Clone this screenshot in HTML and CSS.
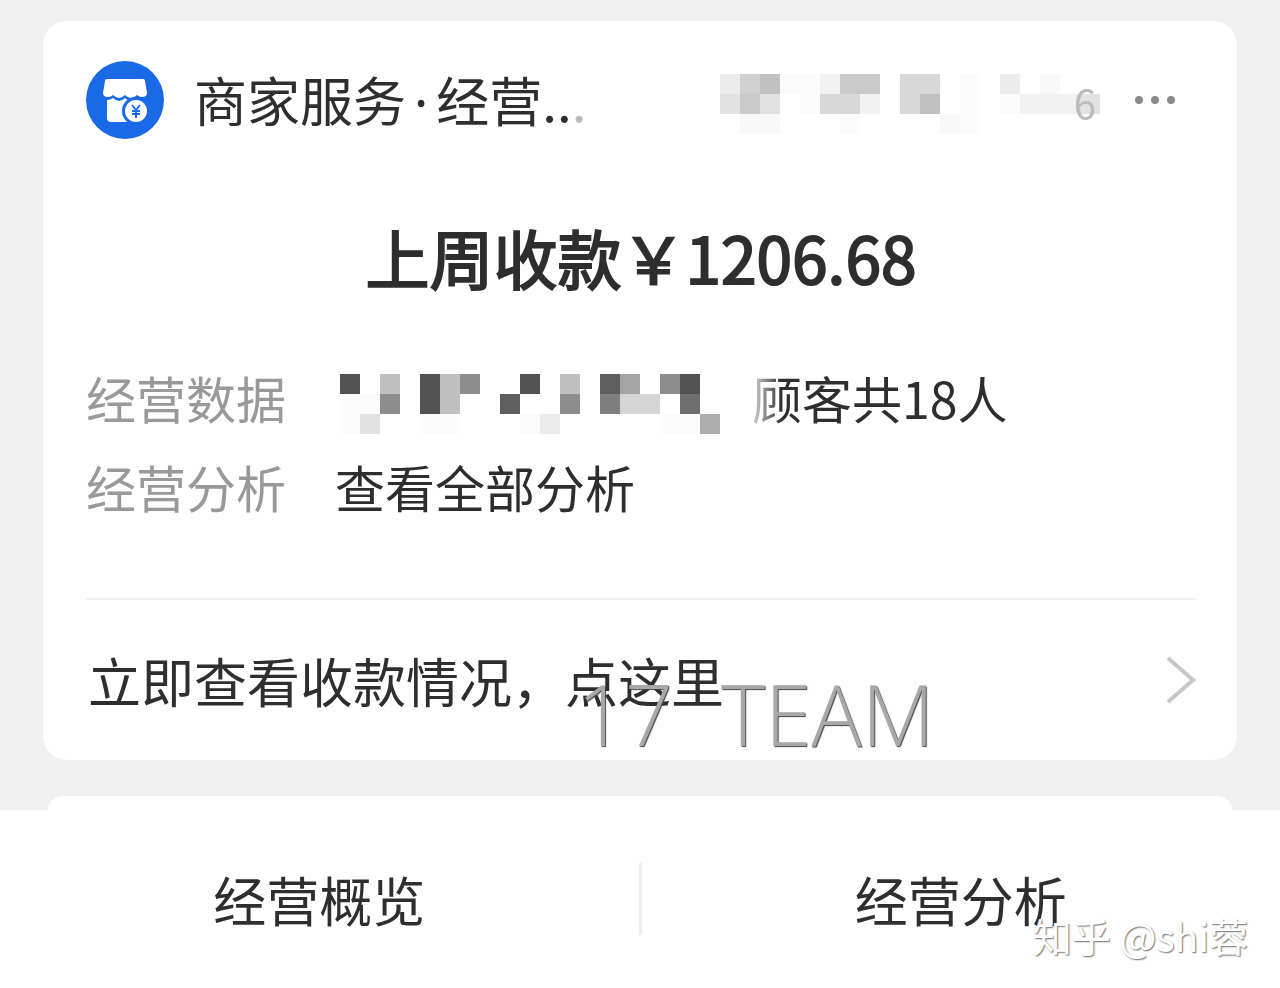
FILE: index.html
```
<!DOCTYPE html>
<html lang="zh-CN">

<head>
  <meta charset="UTF-8">
  <meta name="viewport" content="width=device-width, initial-scale=1.0">
  <title>商家服务</title>
  <link rel="stylesheet" href="styles.css">
</head>

<body>
  <main class="feed">
    <article class="card">
      <header class="card-header">
        <svg class="logo" viewBox="0 0 78 78" aria-hidden="true">
          <circle cx="39" cy="39" r="39" fill="#1a6ae8" />
          <path fill="#fff" d="M21 18h36q2 0 2 2l2 12q0 4-5 4-3 0-5-2-3 3-6 3t-6-3q-3 3-6 3t-6-3q-2 2-5 2-5 0-5-4l2-12q0-2 2-2z" />
          <path fill="#fff" d="M21 39q3 0 6-2 3 3 6 3t6-3q3 3 6 3h10v21H25q-4 0-4-4z" />
          <circle cx="50" cy="50" r="14" fill="#1a6ae8" />
          <circle cx="50" cy="50" r="11" fill="#fff" />
          <path fill="none" stroke="#1a6ae8" stroke-width="2" d="M46 44l4 5 4-5M50 49v8M46 50h8M46 53h8" />
        </svg>
        <h1 class="service">商家服务<span class="dot">·</span>经营..<span class="fade">.</span></h1>
        <div class="time">
          <svg class="mosaic" viewBox="0 0 19 3" shape-rendering="crispEdges" aria-hidden="true">
            <path fill="#ececec" d="M0 0h1v1H0zM14 0h1v1h-1z" />
            <path fill="#d0d0d0" d="M1 0h1v1H1z" />
            <path fill="#c1c1c1" d="M2 0h1v1H2zM10 1h1v1h-1z" />
            <path fill="#e2e2e2" d="M0 1h1v1H0zM2 1h1v1H2zM18 1h1v1h-1z" />
            <path fill="#cacaca" d="M1 1h1v1H1zM6 0h2v1H6z" />
            <path fill="#f2f2f2" d="M5 0h1v1H5zM7 1h1v1H7zM15 1h3v1h-3z" />
            <path fill="#d8d8d8" d="M5 1h2v1H5zM9 0h2v1H9zM9 1h1v1H9z" />
            <path fill="#f8f8f8" d="M16 0h1v1h-1zM1 2h2v1H1zM11 2h1v1h-1z" />
            <path fill="#fbfbfb" d="M3 0h2v1H3zM4 1h1v1H4zM12 0h1v3h-1zM14 1h1v1h-1zM6 2h1v1H6z" />
          </svg>
          <span class="digit">6</span>
        </div>
        <button class="more" aria-label="更多">
          <svg viewBox="0 0 40 8" aria-hidden="true">
            <circle cx="4" cy="4" r="4" />
            <circle cx="20" cy="4" r="4" />
            <circle cx="36" cy="4" r="4" />
          </svg>
        </button>
      </header>

      <h2 class="amount">上周收款￥1206.68</h2>

      <dl class="details">
        <dt>经营数据</dt>
        <dd>
          <svg class="mosaic" viewBox="0 0 19 3" shape-rendering="crispEdges" aria-hidden="true">
            <path fill="#525252" d="M0 0h1v1H0zM4 0h1v2H4zM9 0h1v1H9zM17 0h1v1h-1z" />
            <path fill="#c0c0c0" d="M2 0h1v1H2zM11 0h1v1h-1zM5 0h1v2H5z" />
            <path fill="#8d8d8d" d="M2 1h1v1H2zM6 0h1v1H6zM11 1h1v1h-1zM16 0h1v1h-1z" />
            <path fill="#5e5e5e" d="M8 1h1v1H8zM13 0h1v1h-1z" />
            <path fill="#a3a3a3" d="M14 0h1v1h-1z" />
            <path fill="#7f7f7f" d="M13 1h1v1h-1z" />
            <path fill="#6e6e6e" d="M17 1h1v1h-1z" />
            <path fill="#d5d5d5" d="M14 1h2v1h-2z" />
            <path fill="#e2e2e2" d="M1 2h1v1H1z" />
            <path fill="#ebebeb" d="M10 2h1v1h-1z" />
            <path fill="#adadad" d="M18 2h1v1h-1z" />
            <path fill="#fbfbfb" d="M0 1h2v1H0zM0 2h1v1H0zM4 2h2v1H4zM9 2h1v1H9zM16 2h2v1h-2z" />
          </svg>
          <span class="customers"><span class="first">顾</span>客共18人</span>
        </dd>
        <dt>经营分析</dt>
        <dd>查看全部分析</dd>
      </dl>

      <a class="action" href="#">
        <span>立即查看收款情况，点这里</span>
        <svg class="arrow" viewBox="0 0 30 48" aria-hidden="true">
          <path d="M2 2l25 22L2 46" />
        </svg>
      </a>
      <div class="team-mark"><span>17</span><span>TEAM</span></div>
    </article>
    <div class="card next-card"></div>
  </main>

  <nav class="tabs">
    <button class="tab">经营概览</button>
    <button class="tab">经营分析</button>
    <div class="zhihu-mark">知乎 @shi蓉</div>
  </nav>
</body>

</html>
```
FILE: styles.css
```
* {
  box-sizing: border-box;
}

body {
  display: flex;
  flex-direction: column;
  min-height: 100vh;
  margin: 0;
  background-color: #f0f0f0;
  color: #2e2e2e;
  font-family: "Noto Sans CJK SC", sans-serif;
}

h1,
h2,
dl,
dd {
  margin: 0;
}

button {
  padding: 0;
  border: 0;
  background: none;
  color: inherit;
  font-family: inherit;
  cursor: pointer;
}

.feed {
  padding: 21px 43px 0;
}

.card {
  position: relative;
  padding: 40px 41px 0 43px;
  border-radius: 24px;
  background-color: #fefefe;
}

.card-header {
  display: flex;
  align-items: center;
  height: 78px;
}

.logo {
  flex: none;
  width: 78px;
  height: 78px;
}

.service {
  flex: 1;
  margin-left: 30px;
  font-size: 53px;
  font-weight: 400;
  line-height: 72px;
  white-space: nowrap;
}

.dot {
  padding: 0 8px;
  font-family: "Noto Sans", sans-serif;
}

.fade {
  color: #bbb;
}

.time {
  display: flex;
  position: relative;
  margin-top: 8px;
}

.mosaic {
  flex: none;
  width: 380px;
  height: 60px;
}

.digit {
  position: absolute;
  right: 4px;
  top: 0;
  color: #bbb;
  font-size: 40px;
  line-height: 56px;
}

.more {
  width: 40px;
  height: 40px;
  margin: 0 21px 0 35px;
}

.more svg {
  display: block;
  width: 40px;
  fill: #8a8a8a;
}

.amount {
  margin-top: 77px;
  font-size: 64px;
  font-weight: 400;
  line-height: 80px;
  text-align: center;
  -webkit-text-stroke: 2px #2e2e2e;
}

.details {
  display: grid;
  grid-template-columns: auto 1fr;
  column-gap: 49px;
  margin-top: 57px;
  padding-bottom: 67px;
  font-size: 50px;
  line-height: 89px;
}

.details dt {
  color: #999;
}

.details dd {
  display: flex;
  align-items: center;
}

.details .mosaic {
  margin: 12px 0 0 5px;
}

.customers {
  margin-left: 32px;
}

.first {
  background: linear-gradient(90deg, #bbb 10%, #2e2e2e 60%);
  background-clip: text;
  color: transparent;
}

.action {
  display: flex;
  align-items: center;
  justify-content: space-between;
  height: 162px;
  padding-left: 2px;
  border-top: 2px solid #f0f0f0;
  color: inherit;
  font-size: 53px;
  text-decoration: none;
}

.arrow {
  width: 30px;
  height: 48px;
  fill: none;
  stroke: #c8c8c8;
  stroke-width: 4;
}

.team-mark {
  position: absolute;
  left: 534px;
  bottom: 0;
  display: flex;
  gap: 48px;
  color: #a8a8a8;
  font-family: "Open Sans", sans-serif;
  font-size: 84px;
  font-weight: 300;
  line-height: 92px;
  text-shadow: 1px 1px 1px #444;
  pointer-events: none;
}

.next-card {
  height: 14px;
  margin: 36px 5px 0;
  padding: 0;
  border-radius: 20px 20px 0 0;
}

.tabs {
  position: relative;
  display: flex;
  flex: 1;
  align-items: center;
  background-color: #fefefe;
}

.tab {
  flex: 1;
  height: 72px;
  font-size: 53px;
  line-height: 72px;
}

.tab + .tab {
  border-left: 3px solid #ececec;
}

.zhihu-mark {
  position: absolute;
  right: 32px;
  bottom: 23px;
  color: #fff;
  font-size: 39px;
  line-height: 60px;
  text-shadow: 1px 1px 1px #888, 1px 1px 2px #bbb;
  pointer-events: none;
}
```
